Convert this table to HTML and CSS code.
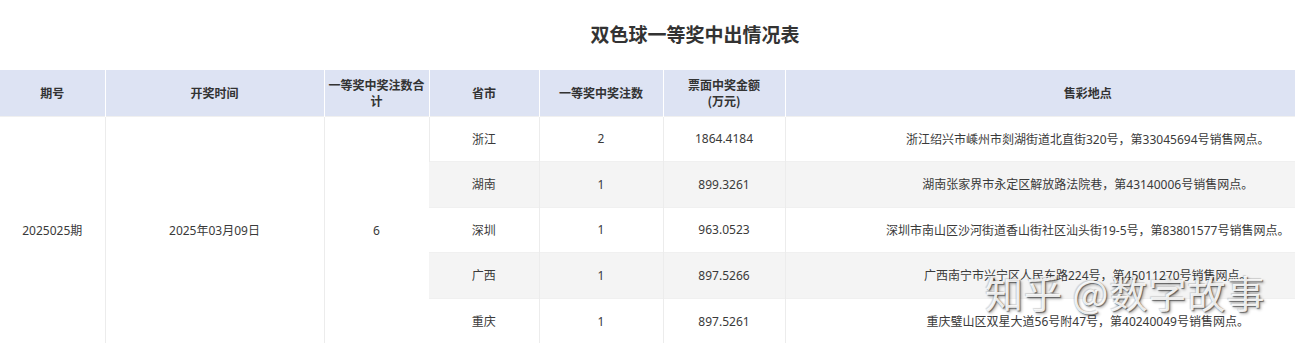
FILE: index.html
```html
<!DOCTYPE html>
<html lang="zh-CN">
<head>
<meta charset="utf-8">
<title>双色球一等奖中出情况表</title>
<link rel="stylesheet" href="styles.css">
</head>
<body>
<div class="page">
  <h1 class="title">双色球一等奖中出情况表</h1>
  <table class="table">
    <colgroup>
      <col class="c1"><col class="c2"><col class="c3"><col class="c4"><col class="c5"><col class="c6"><col class="c7">
    </colgroup>
    <thead>
      <tr>
        <th>期号</th>
        <th>开奖时间</th>
        <th>一等奖中奖注数合计</th>
        <th>省市</th>
        <th>一等奖中奖注数</th>
        <th>票面中奖金额<br>(万元)</th>
        <th>售彩地点</th>
      </tr>
    </thead>
    <tbody>
      <tr>
        <td rowspan="5" class="span">2025025期</td>
        <td rowspan="5" class="span">2025年03月09日</td>
        <td rowspan="5" class="span">6</td>
        <td>浙江</td><td>2</td><td>1864.4184</td>
        <td>浙江绍兴市嵊州市剡湖街道北直街320号，第33045694号销售网点。</td>
      </tr>
      <tr class="alt">
        <td>湖南</td><td>1</td><td>899.3261</td>
        <td>湖南张家界市永定区解放路法院巷，第43140006号销售网点。</td>
      </tr>
      <tr>
        <td>深圳</td><td>1</td><td>963.0523</td>
        <td>深圳市南山区沙河街道香山街社区汕头街19-5号，第83801577号销售网点。</td>
      </tr>
      <tr class="alt">
        <td>广西</td><td>1</td><td>897.5266</td>
        <td>广西南宁市兴宁区人民东路224号，第45011270号销售网点。</td>
      </tr>
      <tr>
        <td>重庆</td><td>1</td><td>897.5261</td>
        <td>重庆璧山区双星大道56号附47号，第40240049号销售网点。</td>
      </tr>
    </tbody>
  </table>
  <div class="watermark">知乎 @数字故事</div>
</div>
</body>
</html>
```
FILE: styles.css
```css
html, body {
  margin: 0;
  padding: 0;
  background: #fff;
  overflow: hidden;
}
.page {
  position: relative;
  width: 1390px;
  font-family: "Noto Sans", "Noto Sans CJK SC", sans-serif;
  color: #333;
}
.title {
  margin: 0;
  height: 70px;
  line-height: 68px;
  text-align: center;
  font-size: 19px;
  font-weight: bold;
  font-family: "Noto Sans CJK SC", sans-serif;
  color: #333;
}
.table {
  width: 1390px;
  border-collapse: collapse;
  table-layout: fixed;
  font-size: 12px;
}
.c1 { width: 105px; }
.c2 { width: 219px; }
.c3 { width: 105px; }
.c4 { width: 110px; }
.c5 { width: 124px; }
.c6 { width: 122px; }
.c7 { width: 605px; }
.table th {
  background: #dde3f3;
  height: 46px;
  padding: 0 4px;
  font-weight: bold;
  font-family: "Noto Sans CJK SC", sans-serif;
  line-height: 16px;
  border-left: 1px solid #fff;
  text-align: center;
  color: #333;
  box-sizing: border-box;
}
.table th:first-child { border-left: none; }
.table td {
  height: 45.5px;
  padding: 0 4px;
  text-align: center;
  border-left: 1px solid #ececec;
  border-top: 1px solid #f0f0f0;
  box-sizing: border-box;
  color: #3a3a3a;
}
.table td:first-child { border-left: none; }
.table tr.alt td { background: #f4f4f4; }
.watermark {
  position: absolute;
  left: 985px;
  top: 264px;
  font-size: 38px;
  font-family: "Noto Sans CJK SC", sans-serif;
  color: rgba(255, 255, 255, 0.9);
  text-shadow: 1px 1px 1px rgba(0, 0, 0, 0.5), 2px 2px 3px rgba(0, 0, 0, 0.3), -1px -1px 1px rgba(0, 0, 0, 0.15);
  white-space: nowrap;
  letter-spacing: 1px;
}
```
